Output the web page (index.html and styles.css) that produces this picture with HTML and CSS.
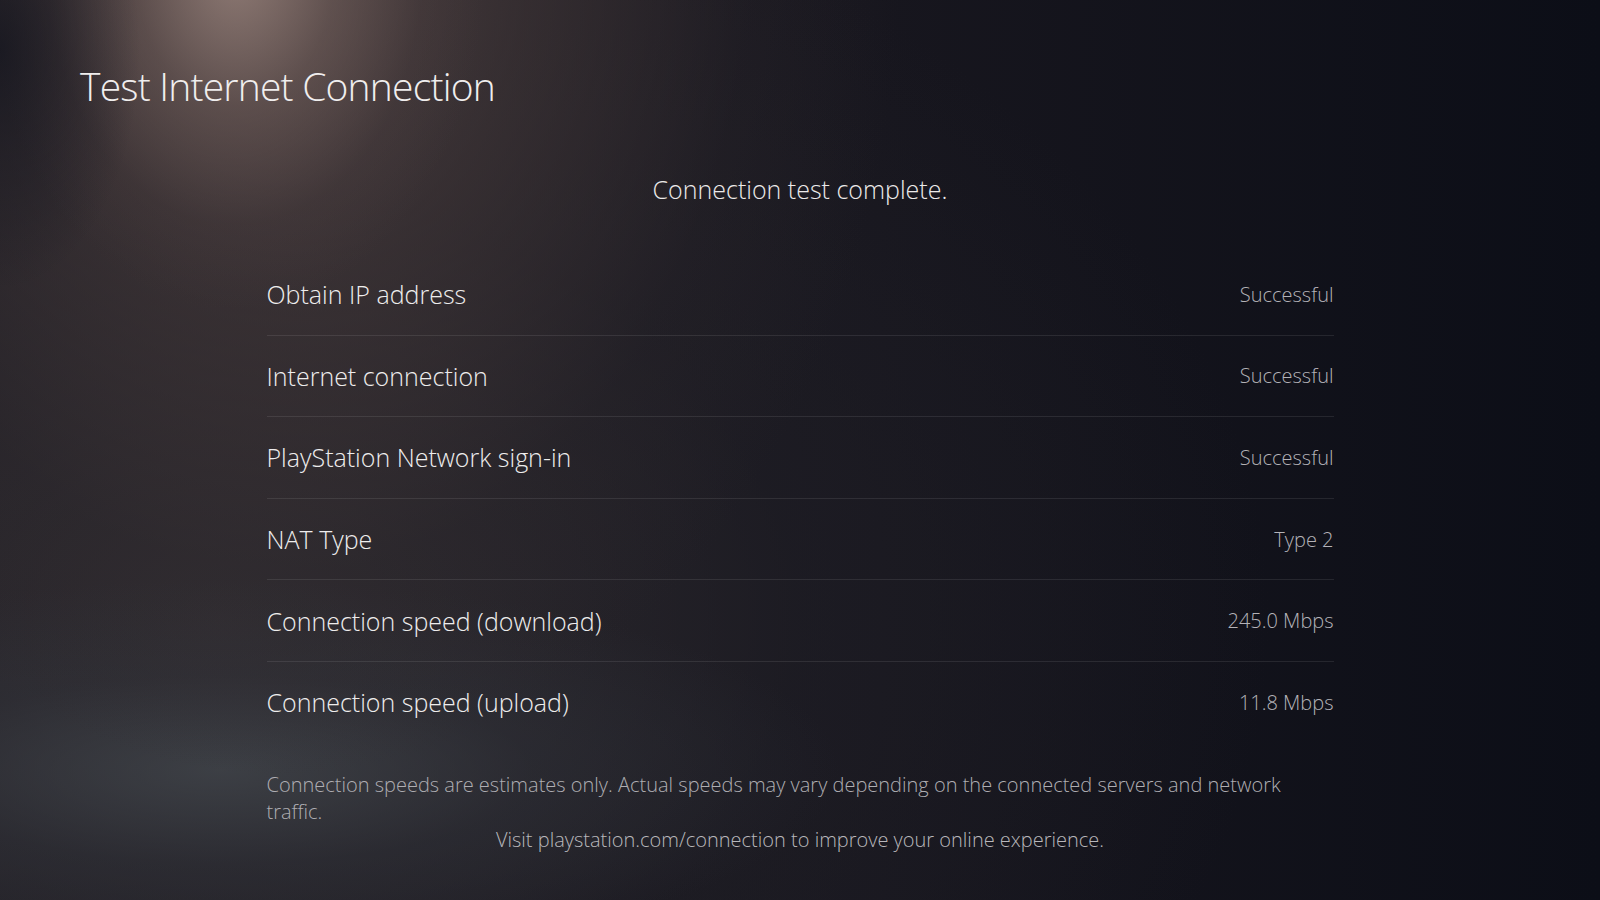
FILE: index.html
```html
<!DOCTYPE html>
<html lang="en">
<head>
<meta charset="utf-8">
<title>Test Internet Connection</title>
<link rel="stylesheet" href="styles.css">
</head>
<body>
<div class="screen">
  <h1 class="title">Test Internet Connection</h1>
  <p class="status">Connection test complete.</p>
  <div class="results">
    <div class="row"><span class="label">Obtain IP address</span><span class="value">Successful</span></div>
    <div class="row"><span class="label">Internet connection</span><span class="value">Successful</span></div>
    <div class="row"><span class="label">PlayStation Network sign-in</span><span class="value">Successful</span></div>
    <div class="row"><span class="label">NAT Type</span><span class="value">Type 2</span></div>
    <div class="row"><span class="label">Connection speed (download)</span><span class="value">245.0 Mbps</span></div>
    <div class="row last"><span class="label">Connection speed (upload)</span><span class="value">11.8 Mbps</span></div>
    <p class="note">Connection speeds are estimates only. Actual speeds may vary depending on the connected servers and network traffic.</p>
  </div>
  <p class="visit">Visit playstation.com/connection to improve your online experience.</p>
</div>
</body>
</html>
```
FILE: styles.css
```css
html, body {
  margin: 0;
  padding: 0;
  width: 1600px;
  height: 900px;
  overflow: hidden;
}
body {
  font-family: "Open Sans", "Noto Sans", sans-serif;
  font-weight: 300;
  color: #e8e6e6;
  background-color: #0c0e17;
  background-image:
    radial-gradient(ellipse 140px 240px at 0px 50px, rgba(16,18,28,0.7) 0%, rgba(16,18,28,0) 100%),
    radial-gradient(ellipse 250px 340px at 235px -30px, rgba(165,142,134,0.75) 0%, rgba(125,105,100,0.45) 40%, rgba(85,70,70,0.18) 75%, rgba(60,50,52,0) 100%),
    radial-gradient(ellipse 620px 820px at 280px -40px, rgba(92,76,74,0.75) 0%, rgba(72,60,60,0.55) 40%, rgba(48,42,46,0.25) 75%, rgba(12,14,23,0) 100%),
    radial-gradient(ellipse 620px 190px at 220px 770px, rgba(70,76,82,0.65) 0%, rgba(52,56,64,0.35) 50%, rgba(12,14,23,0) 100%),
    radial-gradient(ellipse 1050px 780px at 220px 620px, rgba(50,46,50,0.9) 0%, rgba(32,31,38,0.55) 55%, rgba(12,14,23,0) 100%),
    linear-gradient(90deg, #221f25 0%, #17161e 55%, #0c0e17 100%);
}
.screen {
  display: flex;
  flex-direction: column;
  padding: 60px 0 0 0;
}
.title {
  margin: 0 0 0 80px;
  font-size: 39px;
  font-weight: 300;
  line-height: 52px;
  color: #f0eeee;
  letter-spacing: -0.8px;
}
.status {
  margin: 60px 0 0 0;
  text-align: center;
  font-size: 25px;
  line-height: 34px;
  color: #eceaea;
}
.results {
  width: 1067px;
  margin: 48px auto 0 auto;
  display: flex;
  flex-direction: column;
}
.row {
  display: flex;
  justify-content: space-between;
  align-items: center;
  height: 80.6px;
  border-bottom: 1px solid rgba(255,255,255,0.09);
}
.row.last {
  border-bottom: none;
}
.label {
  font-size: 25px;
  color: #eeeded;
}
.value {
  font-size: 20px;
  color: #b4b3b8;
}
.note {
  margin: 28px 0 0 0;
  font-size: 20px;
  line-height: 27.5px;
  color: #aeadb2;
}
.visit {
  margin: 0;
  text-align: center;
  font-size: 20px;
  line-height: 27.5px;
  color: #b8b7bb;
}
```
